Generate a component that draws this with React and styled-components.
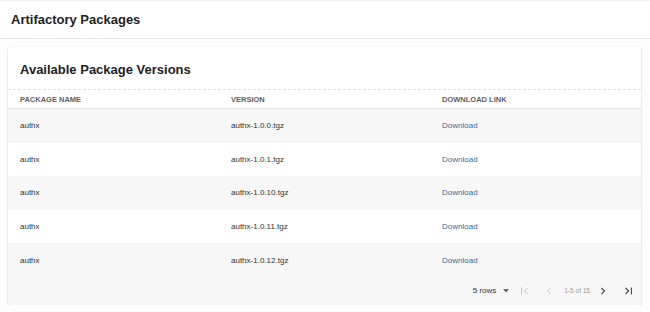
import React from "react";
import styled, { createGlobalStyle } from "styled-components";

const Global = createGlobalStyle`
  html, body { margin: 0; padding: 0; background: #fdfdfd; }
  body { font-family: "Liberation Sans", Arial, sans-serif; color: #333; }
`;

const Header = styled.header`
  height: 38px;
  display: flex;
  align-items: center;
  padding: 0 11px;
  background: #fff;
  border-bottom: 1px solid #e6e6e6;
  box-shadow: inset 0 2px 2px -1px #ececec;
`;

const Title = styled.h1`
  margin: 0;
  font-size: 13px;
  font-weight: 700;
  color: #1e1e1e;
`;

const Main = styled.main`
  padding: 8px 9px 0 8px;
`;

const Card = styled.section`
  background: #f8f8f8;
  border-radius: 3px;
  box-shadow: 0 1px 2px rgba(0,0,0,0.22), 0 0 2px rgba(0,0,0,0.06);
  overflow: hidden;
`;

const CardHead = styled.div`
  height: 43px;
  display: flex;
  align-items: center;
  padding: 0 12px;
  background: #fff;
  border-bottom: 1px dashed #e0e0e0;
  box-sizing: border-box;
`;

const CardTitle = styled.h2`
  margin: 0;
  padding-top: 2px;
  font-size: 13px;
  font-weight: 700;
  color: #1e1e1e;
`;

const Grid = styled.div`
  display: grid;
  grid-template-columns: 1fr 1fr 1fr;
  align-items: center;
  background: ${p => (p.$head ? "#fff" : p.$stripe ? "#f7f7f7" : "#fff")};
  height: ${p => (p.$head ? "18px" : "33.6px")};
  border-bottom: ${p => (p.$head ? "1px solid #e4e4e4" : "none")};
`;

const HeadCell = styled.div`
  padding: 0 12px;
  font-size: 7.5px;
  font-weight: 700;
  color: #5f5f5f;
  text-transform: uppercase;
`;

const Cell = styled.div`
  padding: 0 12px;
  font-size: 8px;
  color: #333;
`;

const Link = styled.a`
  font-size: 8px;
  color: #3d6a9e;
  text-decoration: none;
`;

const Footer = styled.div`
  height: 28px;
  display: flex;
  align-items: center;
  justify-content: flex-end;
  padding-right: 9px;
  background: #f7f7f7;
`;

const RowsLabel = styled.span`
  font-size: 8px;
  color: #333;
`;

const Slot = styled.span`
  display: inline-flex;
  align-items: center;
  color: ${p => (p.$disabled ? "#c4c4c4" : "#444")};
  margin-left: ${p => p.$ml}px;
`;

const Range = styled.span`
  font-size: 6.5px;
  color: #999;
  margin-left: ${p => p.$ml}px;
`;

const Caret = () => (
  <svg width="6" height="4" viewBox="0 0 6 4"><path d="M0 0h6L3 3.5z" fill="#666" /></svg>
);

const FirstIcon = () => (
  <svg width="7" height="8" viewBox="0 0 7 8" fill="none" stroke="currentColor" strokeWidth="1">
    <path d="M0.5 0.5v7M6.5 1L3.5 4l3 3" />
  </svg>
);
const PrevIcon = () => (
  <svg width="4" height="8" viewBox="0 0 4 8" fill="none" stroke="currentColor" strokeWidth="1">
    <path d="M3.5 1L0.5 4l3 3" />
  </svg>
);
const NextIcon = () => (
  <svg width="4" height="8" viewBox="0 0 4 8" fill="none" stroke="currentColor" strokeWidth="1.2">
    <path d="M0.5 1l3 3-3 3" />
  </svg>
);
const LastIcon = () => (
  <svg width="7" height="8" viewBox="0 0 7 8" fill="none" stroke="currentColor" strokeWidth="1.1">
    <path d="M0.5 1l3 3-3 3M6.4 0.5v7" />
  </svg>
);

const versions = ["1.0.0", "1.0.1", "1.0.10", "1.0.11", "1.0.12"];

export default function App() {
  return (
    <>
      <Global />
      <Header>
        <Title>Artifactory Packages</Title>
      </Header>
      <Main>
        <Card>
          <CardHead>
            <CardTitle>Available Package Versions</CardTitle>
          </CardHead>
          <Grid $head>
            <HeadCell>Package Name</HeadCell>
            <HeadCell>Version</HeadCell>
            <HeadCell>Download Link</HeadCell>
          </Grid>
          {versions.map((v, i) => (
            <Grid key={v} $stripe={i % 2 === 0}>
              <Cell>authx</Cell>
              <Cell>authx-{v}.tgz</Cell>
              <Cell>
                <Link href="#">Download</Link>
              </Cell>
            </Grid>
          ))}
          <Footer>
            <RowsLabel>5 rows</RowsLabel>
            <Slot $ml={7}><Caret /></Slot>
            <Slot $ml={12} $disabled><FirstIcon /></Slot>
            <Slot $ml={19} $disabled><PrevIcon /></Slot>
            <Range $ml={13}>1-5 of 15</Range>
            <Slot $ml={11}><NextIcon /></Slot>
            <Slot $ml={20}><LastIcon /></Slot>
          </Footer>
        </Card>
      </Main>
    </>
  );
}
